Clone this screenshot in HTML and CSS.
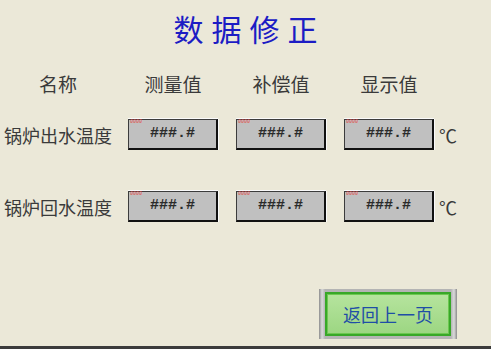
FILE: index.html
```html
<!DOCTYPE html>
<html lang="zh-CN">
<head>
  <meta charset="UTF-8" />
  <title>数据修正</title>
  <link rel="stylesheet" href="styles.css">
</head>
<body>

<div class="screen">
  <h1 class="title">数据修正</h1>

  <div class="grid">
    <div class="head name">名称</div>
    <div class="head">测量值</div>
    <div class="head">补偿值</div>
    <div class="head">显示值</div>
    <div></div>

    <div class="label row1">锅炉出水温度</div>
    <div class="box row1"><span class="tag">0000</span>###.#</div>
    <div class="box row1"><span class="tag">0000</span>###.#</div>
    <div class="box row1"><span class="tag">0000</span>###.#</div>
    <div class="unit row1">℃</div>

    <div class="label row2">锅炉回水温度</div>
    <div class="box row2"><span class="tag">0000</span>###.#</div>
    <div class="box row2"><span class="tag">0000</span>###.#</div>
    <div class="box row2"><span class="tag">0000</span>###.#</div>
    <div class="unit row2">℃</div>
  </div>

  <div class="actions">
    <div class="btn-frame">
      <button class="btn">返回上一页</button>
    </div>
  </div>
</div>
<div class="bottom-bar"></div>

</body>
</html>
```

FILE: styles.css
```css
body {
  margin: 0;
  background: #ebe8d8;
  font-family: "Noto Sans CJK SC", "Noto Sans", sans-serif;
  color: #3a3a3a;
  overflow: hidden;
}
.screen {
  height: 346px;
  display: flex;
  flex-direction: column;
}
.title {
  margin: 0;
  padding-top: 8px;
  padding-left: 8px;
  font-size: 30px;
  line-height: 40px;
  font-weight: 400;
  letter-spacing: 8px;
  text-align: center;
  color: #1c1cc4;
}
.grid {
  display: grid;
  grid-template-columns: 110px 90px 90px 90px auto;
  column-gap: 18px;
  align-items: center;
  margin-top: 24px;
}
.head {
  font-size: 19px;
  line-height: 24px;
  text-align: center;
  white-space: nowrap;
}
.head.name {
  width: 108px;
  margin-left: 4px;
}
.label {
  font-size: 18px;
  line-height: 24px;
  padding-left: 4px;
  white-space: nowrap;
}
.row1 { margin-top: 23px; }
.row2 { margin-top: 41px; }
.box {
  position: relative;
  height: 28px;
  background: #c0c0c0;
  border-top: 1px solid #3c3c3c;
  border-left: 1px solid #3c3c3c;
  border-right: 2px solid #111;
  border-bottom: 2px solid #111;
  box-shadow: 0 -1px 0 #fafafa, 1px 0 0 #fafafa;
  font-family: "Liberation Mono", monospace;
  font-size: 15px;
  font-weight: 700;
  line-height: 28px;
  text-align: center;
  color: #2a2a2a;
}
.tag {
  position: absolute;
  left: 1px;
  top: 0;
  font-size: 5px;
  line-height: 5px;
  font-weight: 400;
  color: #e04848;
}
.unit {
  font-size: 18px;
  line-height: 24px;
  margin-left: -13px;
}
.actions {
  margin-top: auto;
  display: flex;
  justify-content: flex-end;
  padding-right: 34px;
  padding-bottom: 7px;
}
.btn-frame {
  width: 126px;
  height: 44px;
  padding: 3px 6px;
  background: linear-gradient(90deg, #8c8c8c, #dadada 3px, #b4b4b4 6px, #b4b4b4 calc(100% - 6px), #dadada calc(100% - 3px), #8c8c8c);
}
.btn {
  width: 100%;
  height: 100%;
  border: 2px solid #38a828;
  box-shadow: inset 0 0 0 1px #6cc850;
  background: linear-gradient(#b6e49e, #9cd682);
  font-family: "Noto Sans CJK SC", sans-serif;
  font-size: 18px;
  color: #1f4ea6;
  padding: 0;
  cursor: pointer;
}
.bottom-bar {
  height: 3px;
  background: #3b3b3b;
}
```
